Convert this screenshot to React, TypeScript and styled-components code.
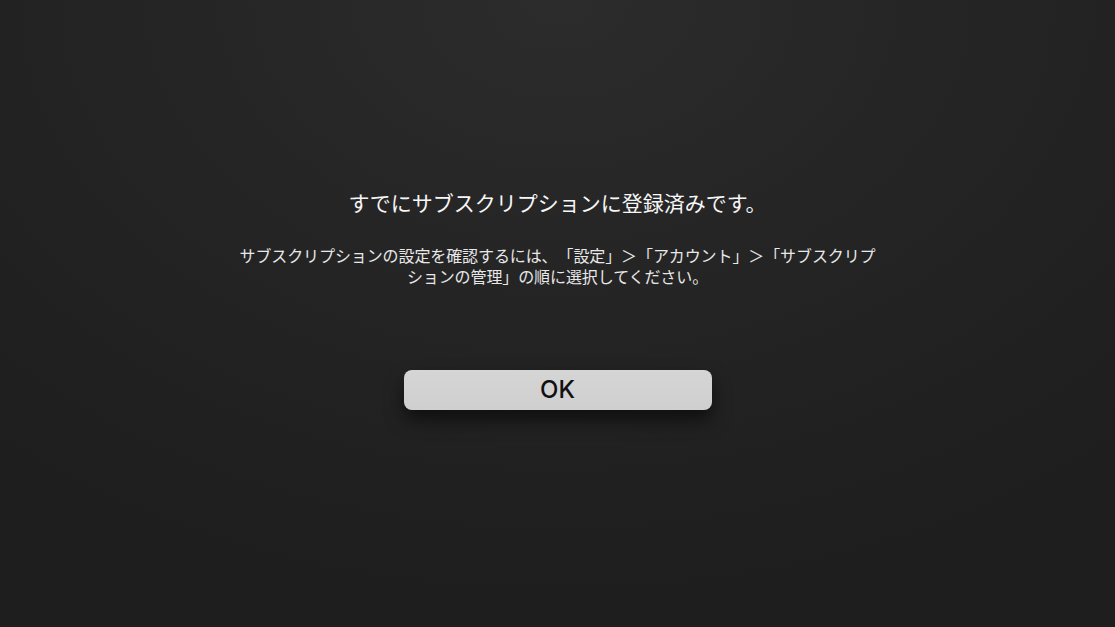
import styled, { createGlobalStyle } from "styled-components";

const GlobalStyle = createGlobalStyle`
  html, body {
    margin: 0;
    padding: 0;
    height: 100%;
    background: #1d1d1d;
  }
  #root {
    height: 100%;
  }
`;

const Screen = styled.div`
  box-sizing: border-box;
  width: 100%;
  height: 100vh;
  display: flex;
  flex-direction: column;
  align-items: center;
  padding-top: 187px;
  background: radial-gradient(
    ellipse 75% 95% at 50% 0%,
    #2c2c2c 0%,
    #252525 45%,
    #1e1e1e 100%
  );
  font-family: "Noto Sans CJK JP", "Noto Sans", sans-serif;
  overflow: hidden;
`;

const Title = styled.h1`
  margin: 0;
  font-size: 21px;
  line-height: 30px;
  font-weight: 400;
  color: #f6f6f6;
  text-align: center;
`;

const Message = styled.p`
  margin: 28px 0 0;
  max-width: 644px;
  font-size: 16px;
  line-height: 21px;
  font-weight: 400;
  letter-spacing: -0.1px;
  color: #e8e8e8;
  text-align: center;
  text-spacing-trim: space-all;
`;

const OkButton = styled.button`
  margin-top: 83px;
  width: 308px;
  height: 40px;
  border: none;
  border-radius: 8px;
  background: linear-gradient(#d5d5d5, #cfcfcf);
  box-shadow: 0 10px 18px rgba(0, 0, 0, 0.55);
  color: #111;
  font-family: Inter, "Liberation Sans", sans-serif;
  font-size: 24px;
  font-weight: 500;
  line-height: 40px;
  padding: 0;
  cursor: pointer;
`;

export default function App() {
  return (
    <>
      <GlobalStyle />
      <Screen>
        <Title>すでにサブスクリプションに登録済みです。</Title>
        <Message>
          サブスクリプションの設定を確認するには、「設定」＞「アカウント」＞「サブスクリプションの管理」の順に選択してください。
        </Message>
        <OkButton>OK</OkButton>
      </Screen>
    </>
  );
}
